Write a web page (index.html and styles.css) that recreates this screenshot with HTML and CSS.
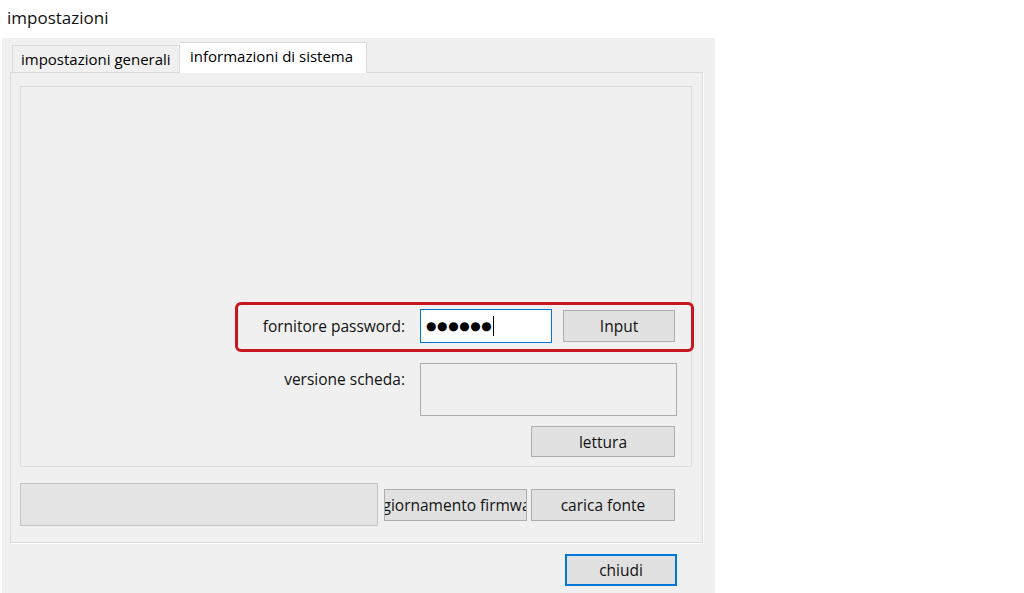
FILE: index.html
```html
<!DOCTYPE html>
<html lang="it">
<head>
<meta charset="utf-8">
<title>impostazioni</title>
<link rel="stylesheet" href="styles.css">
</head>
<body>
<div class="title">impostazioni</div>
<div class="window">
  <div class="tabs">
    <div class="tab">impostazioni generali</div>
    <div class="tab active">informazioni di sistema</div>
  </div>
  <div class="pane">
    <div class="group">
      <div class="row row-pass">
        <div class="label">fornitore password:</div>
        <div class="input focus"><span class="dots">●●●●●●</span><span class="caret"></span></div>
        <div class="btn btn-input">Input</div>
      </div>
      <div class="row row-ver">
        <div class="label label-top">versione scheda:</div>
        <div class="textbox"></div>
      </div>
      <div class="row row-read">
        <div class="btn btn-read">lettura</div>
      </div>
      <div class="highlight"></div>
    </div>
    <div class="bottom">
      <div class="field"></div>
      <div class="btn btn-fw"><span>aggiornamento firmware</span></div>
      <div class="btn btn-font">carica fonte</div>
    </div>
  </div>
  <div class="footer">
    <div class="btn btn-close">chiudi</div>
  </div>
</div>
</body>
</html>
```

FILE: styles.css
```css
html, body {
  margin: 0;
  padding: 0;
  background: #ffffff;
}
body {
  font-family: "Open Sans", "Noto Sans", "DejaVu Sans", sans-serif;
  font-size: 15.5px;
  color: #000;
  width: 1024px;
  height: 593px;
  overflow: hidden;
}
.title {
  height: 38px;
  line-height: 36px;
  padding-left: 7px;
  font-size: 17px;
  color: #111;
}
.window {
  margin-left: 2px;
  width: 713px;
  height: 555px;
  background: #f0f0f0;
  box-sizing: border-box;
  padding: 4px 12px 0 8px;
}
.tabs {
  display: flex;
  align-items: flex-end;
  height: 30px;
  padding-left: 2px;
  position: relative;
  z-index: 2;
}
.tab {
  width: 168px;
  height: 27px;
  box-sizing: border-box;
  border: 1px solid #d9d9d9;
  border-bottom: none;
  padding: 0 0 0 8px;
  line-height: 27px;
  background: #f0f0f0;
  white-space: nowrap;
  font-size: 15px;
}
.tab.active {
  width: 187px;
  height: 31px;
  margin-bottom: -1px;
  background: #ffffff;
  line-height: 27px;
  padding: 0 0 0 10px;
  border-left: none;
}
.pane {
  border: 1px solid #dadada;
  box-shadow: 1px 1px 0 #ffffff;
  height: 471px;
  box-sizing: border-box;
  padding: 13px 10px 0 9px;
  display: flex;
  flex-direction: column;
}
.group {
  position: relative;
  height: 381px;
  border: 1px solid #dcdcdc;
  box-sizing: border-box;
  display: flex;
  flex-direction: column;
  justify-content: flex-end;
  padding-bottom: 9px;
}
.row {
  display: flex;
  align-items: center;
}
.label {
  flex: 1;
  text-align: right;
  padding-right: 15px;
  color: #111;
}
.label-top {
  align-self: flex-start;
  padding-top: 5px;
}
.input {
  width: 132px;
  height: 34px;
  box-sizing: border-box;
  background: #ffffff;
  border: 1px solid #0078d7;
  display: flex;
  align-items: center;
  padding-left: 5px;
}
.dots {
  font-family: "DejaVu Sans", sans-serif;
  font-size: 12px;
  letter-spacing: 0.6px;
  line-height: 1;
}
.caret {
  width: 1px;
  height: 20px;
  background: #000;
  margin-left: 1px;
}
.btn {
  background: #e1e1e1;
  border: 1px solid #adadad;
  box-sizing: border-box;
  display: flex;
  align-items: center;
  justify-content: center;
  white-space: nowrap;
  overflow: hidden;
  color: #111;
}
.btn-input {
  width: 112px;
  height: 32px;
  margin-left: 11px;
  margin-right: 16px;
}
.row-ver {
  margin-top: 20px;
  align-items: flex-start;
}
.textbox {
  width: 257px;
  height: 53px;
  box-sizing: border-box;
  border: 1px solid #adadad;
  background: #f0f0f0;
  margin-right: 14px;
}
.row-read {
  margin-top: 10px;
  justify-content: flex-end;
}
.btn-read {
  width: 144px;
  height: 31px;
  margin-right: 16px;
}
.highlight {
  position: absolute;
  left: 214px;
  top: 215px;
  width: 459px;
  height: 50px;
  box-sizing: border-box;
  border: 3px solid #c8161e;
  border-radius: 6px;
}
.bottom {
  margin-top: 16px;
  display: flex;
  align-items: center;
}
.field {
  width: 358px;
  height: 43px;
  box-sizing: border-box;
  background: #e4e4e4;
  border: 1px solid #c4c4c4;
}
.btn-fw {
  width: 143px;
  height: 32px;
  margin-left: 6px;
}
.btn-font {
  width: 144px;
  height: 32px;
  margin-left: 4px;
}
.footer {
  display: flex;
  justify-content: flex-end;
  padding-top: 11px;
  padding-right: 26px;
}
.btn-close {
  width: 112px;
  height: 32px;
  border: 2px solid #0078d7;
}
```
